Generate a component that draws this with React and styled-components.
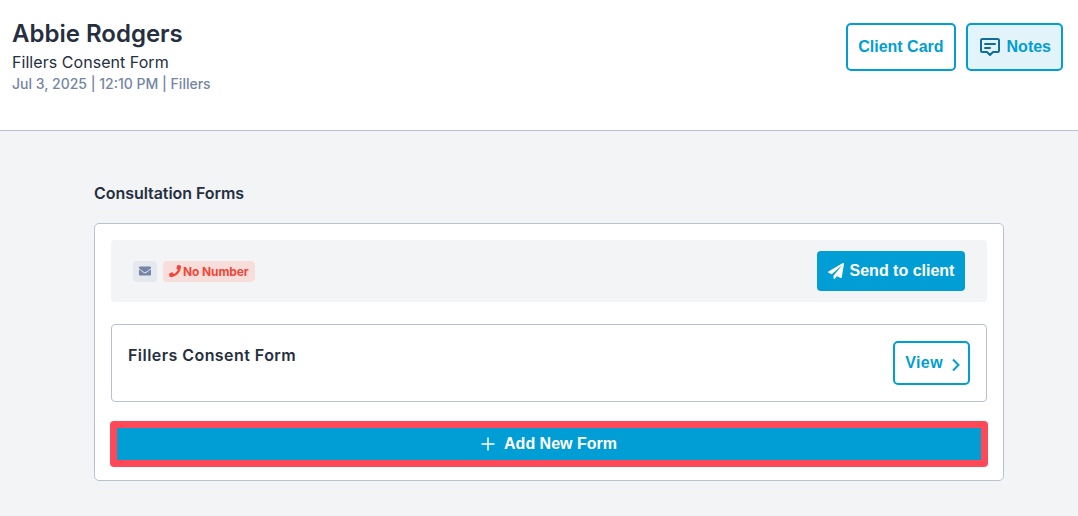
import React from 'react';
import styled, { createGlobalStyle } from 'styled-components';
import { FaEnvelope, FaPaperPlane, FaPhone } from 'react-icons/fa';

const GlobalStyle = createGlobalStyle`
  html, body {
    margin: 0;
    padding: 0;
    background: #f3f4f6;
    font-family: Inter, "Liberation Sans", sans-serif;
    color: #252f3f;
  }
`;

const Page = styled.div`
  width: 1078px;
  height: 516px;
  overflow: hidden;
`;

const Header = styled.header`
  box-sizing: border-box;
  height: 131px;
  background: #fff;
  border-bottom: 1px solid #b8c0d2;
  padding: 23px 15px 0 12px;
  display: flex;
  justify-content: space-between;
  align-items: flex-start;
`;

const Name = styled.h1`
  margin: 1px 0 0;
  font-size: 24px;
  line-height: 20px;
  font-weight: 600;
`;

const SubTitle = styled.div`
  margin-top: 9px;
  font-size: 16px;
  line-height: 19px;
  letter-spacing: 0.05px;
`;

const Meta = styled.div`
  margin-top: 3px;
  font-size: 14px;
  line-height: 17px;
  font-weight: 500;
  color: #7585a5;
`;

const HeaderActions = styled.div`
  display: flex;
  gap: 10px;
`;

const OutlineButton = styled.button`
  box-sizing: border-box;
  height: 48px;
  padding: 0 10px;
  display: flex;
  align-items: center;
  gap: 5px;
  border: 2px solid #019ed5;
  border-radius: 5px;
  background: ${(p) => (p.$active ? '#e3f3fa' : '#fff')};
  color: #019ed5;
  font-family: "Liberation Sans", Arial, sans-serif;
  font-size: 16px;
  font-weight: 700;
`;

const ViewButton = styled(OutlineButton)`
  height: 44px;
  padding: 0 8px 0 10px;
  gap: 9px;
  letter-spacing: 0.4px;
`;

const Content = styled.main`
  padding: 52px 74px 0 94px;
`;

const SectionTitle = styled.h2`
  margin: 0 0 20px;
  font-size: 16px;
  line-height: 20px;
  font-weight: 600;
  letter-spacing: -0.05px;
`;

const Card = styled.section`
  box-sizing: border-box;
  height: 258px;
  background: #fff;
  border: 1px solid #b8c0d2;
  border-radius: 5px;
  padding: 16px 16px 0;
`;

const SendBar = styled.div`
  box-sizing: border-box;
  height: 62px;
  background: #f3f4f6;
  border-radius: 4px;
  padding: 0 22px;
  display: flex;
  align-items: center;
  justify-content: space-between;
`;

const Badges = styled.div`
  display: flex;
  gap: 6px;
`;

const Badge = styled.span`
  box-sizing: border-box;
  height: 21px;
  padding: 0 6px;
  display: flex;
  align-items: center;
  gap: 2px;
  border-radius: 4px;
  background: ${(p) => (p.$danger ? '#f7dedb' : '#e5e8ef')};
  color: ${(p) => (p.$danger ? '#f0473a' : '#7585a5')};
  font-size: 12px;
  font-weight: 700;
  letter-spacing: -0.1px;
`;

const SendButton = styled.button`
  box-sizing: border-box;
  height: 40px;
  width: 148px;
  border: 0;
  border-radius: 4px;
  background: #019ed5;
  color: #fff;
  display: flex;
  align-items: center;
  justify-content: center;
  gap: 6px;
  font-family: "Liberation Sans", Arial, sans-serif;
  font-size: 16px;
  font-weight: 700;
`;

const FormRow = styled.div`
  box-sizing: border-box;
  height: 78px;
  margin-top: 22px;
  padding: 16px 16px 0;
  display: flex;
  justify-content: space-between;
  align-items: flex-start;
  border: 1px solid #b8c0d2;
  border-radius: 4px;
`;

const FormName = styled.div`
  padding-top: 4px;
  font-size: 16px;
  line-height: 20px;
  font-weight: 600;
  letter-spacing: 0.45px;
`;

const AddButton = styled.button`
  box-sizing: border-box;
  display: flex;
  align-items: center;
  justify-content: center;
  gap: 9px;
  width: 878px;
  height: 46px;
  margin: 19px -1px 0;
  border: 7px solid #ff4858;
  border-radius: 4px;
  background: #019ed5;
  color: #fff;
  font-family: "Liberation Sans", Arial, sans-serif;
  font-size: 16px;
  font-weight: 700;
`;

const Chevron = styled.svg`
  transform: translateY(2px);
`;

const NotesIcon = () => (
  <svg width="24" height="20" viewBox="-1 0 24 20" fill="none" stroke="#0f6d96" strokeWidth="2" strokeLinejoin="round" strokeLinecap="round">
    <path d="M3.5 2h15A1.5 1.5 0 0 1 20 3.5v10a1.5 1.5 0 0 1-1.500 1.500H14l-3 3-3-3H3.500A1.500 1.500 0 0 1 2 13.500v-10A1.500 1.500 0 0 1 3.500 2z" />
    <path d="M6 7h10M6 11h5" />
  </svg>
);

const ChevronIcon = () => (
  <Chevron width="8" height="14" viewBox="1 0 8 14" fill="none" stroke="#019ed5" strokeWidth="2">
    <path d="M2 1.500 7.500 7 2 12.500" />
  </Chevron>
);

const PlusIcon = () => (
  <svg width="14" height="14" viewBox="0 0 14 14" stroke="#fff" strokeWidth="1.500">
    <path d="M7 0.500v13M0.500 7h13" />
  </svg>
);

const App = () => (
  <Page>
    <GlobalStyle />
    <Header>
      <div>
        <Name>Abbie Rodgers</Name>
        <SubTitle>Fillers Consent Form</SubTitle>
        <Meta>Jul 3, 2025 | 12:10 PM | Fillers</Meta>
      </div>
      <HeaderActions>
        <OutlineButton>Client Card</OutlineButton>
        <OutlineButton $active><NotesIcon />Notes</OutlineButton>
      </HeaderActions>
    </Header>
    <Content>
      <SectionTitle>Consultation Forms</SectionTitle>
      <Card>
        <SendBar>
          <Badges>
            <Badge><FaEnvelope size={12} /></Badge>
            <Badge $danger><FaPhone size={12} />No Number</Badge>
          </Badges>
          <SendButton><FaPaperPlane size={16} />Send to client</SendButton>
        </SendBar>
        <FormRow>
          <FormName>Fillers Consent Form</FormName>
          <ViewButton>View<ChevronIcon /></ViewButton>
        </FormRow>
        <AddButton><PlusIcon />Add New Form</AddButton>
      </Card>
    </Content>
  </Page>
);

export default App;
